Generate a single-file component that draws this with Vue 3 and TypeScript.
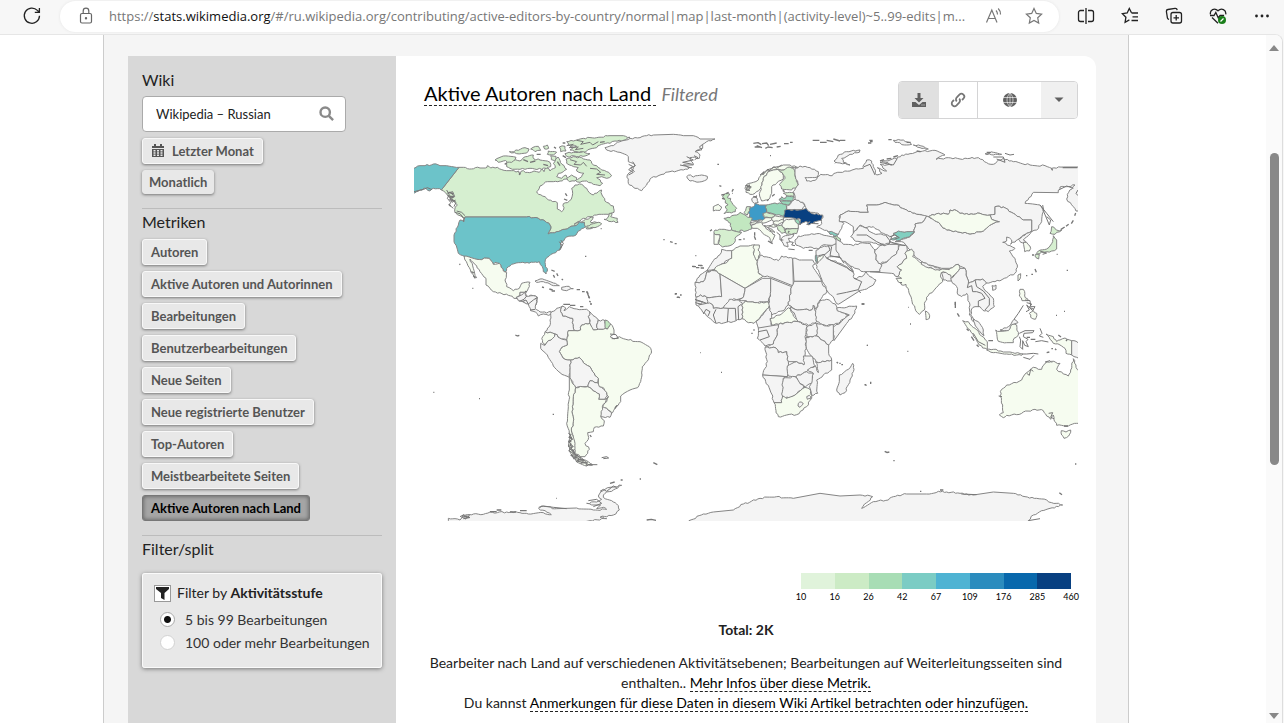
<script setup lang="ts">
import { ref } from 'vue'

type Tone = 'none' | 'faint' | 'pale' | 'soft' | 'mint' | 'sea' | 'aqua' | 'blue' | 'navy' | 'line'
type Country = [Tone, string]
interface Region { x: number; y: number; shapes: Country[]; specks: string }

const metrics = [
  'Autoren', 'Aktive Autoren und Autorinnen', 'Bearbeitungen', 'Benutzerbearbeitungen',
  'Neue Seiten', 'Neue registrierte Benutzer', 'Top-Autoren', 'Meistbearbeitete Seiten',
  'Aktive Autoren nach Land',
]
const activeMetric = ref('Aktive Autoren nach Land')
const wiki = ref('Wikipedia – Russian')
const level = ref('low')
const scaleColors = ['#e0f3db', '#ccebc5', '#a8ddb5', '#7bccc4', '#4eb3d3', '#2b8cbe', '#0868ac', '#084081']
const scaleTicks = [10, 16, 26, 42, 67, 109, 176, 285, 460]

const regions: Region[] = [
  // North America
  { x: 1230, y: 375, shapes: [
    ['pale', '147 127 160 127 178 132 196 128 210 129 226 129 232 122 242 129 262 127 290 137 304 137 318 141 326 138 330 148 334 138 358 143 372 138 388 142 395 132 402 140 410 128 420 138 436 128 430 116 436 102 444 96 450 106 456 118 470 133 460 140 445 145 440 155 455 160 468 150 475 162 450 168 430 170 412 170 402 175 390 183 380 200 386 208 405 215 415 225 442 233 442 252 455 260 462 248 460 236 472 233 484 222 488 205 485 190 495 180 515 178 530 190 538 203 550 210 565 200 575 195 576 210 590 232 610 243 612 262 595 268 560 270 520 280 492 298 515 290 540 278 550 277 540 290 572 296 550 308 530 312 522 302 523 292 505 296 490 303 465 313 440 320 414 327 422 312 420 300 405 288 385 280 350 276 165 276 160 280 150 272 138 265 134 255 142 240 130 228 112 210 94 195'],
    ['aqua', '-20 138 12 130 30 122 45 122 70 117 90 122 110 122 147 127 94 195 82 191 70 190 60 198 48 190 30 195 20 200 0 206 -20 206'],
    ['aqua', '165 276 350 276 385 280 405 288 420 300 422 312 414 327 440 320 465 313 490 303 505 296 508 290 523 292 526 305 505 318 498 330 470 336 455 350 450 375 430 385 410 398 405 412 412 438 408 447 400 440 397 425 388 410 370 412 345 414 325 413 305 418 290 430 288 440 280 438 268 415 255 412 250 418 238 400 200 403 165 395 145 385 138 360 132 350 132 330 145 300 150 285 162 290'],
    ['faint', '163 393 200 403 238 400 250 418 268 415 280 438 290 442 285 465 290 485 310 497 328 490 335 475 360 472 355 490 345 502 330 502 330 512 318 520 295 511 250 500 228 480 228 460 210 440 190 412 180 402 190 430 200 458 192 455 178 428 165 405'],
    ['none', '318 520 330 512 330 502 345 502 348 514 370 512 382 518 378 540 360 538 330 527'],
    ['none', '375 468 390 462 415 468 430 474 448 482 430 482 420 477 400 470 385 472'],
    ['none', '455 487 470 484 490 491 470 497 455 494'],
    ['pale', '290 112 310 105 330 108 340 98 358 92 370 90 372 102 390 105 420 112 422 125 395 133 360 130 330 133 300 130 290 125'],
    ['pale', '255 105 280 93 318 97 305 112 280 108 265 112'],
    ['pale', '470 50 490 48 520 40 560 38 600 32 640 32 660 37 640 46 615 48 600 55 575 58 560 68 540 72 520 82 495 80 480 75 500 64 475 60'],
    ['pale', '465 86 490 82 520 80 540 86 525 93 500 95 470 94'],
    ['pale', '468 102 490 95 515 98 540 105 545 115 560 122 575 135 590 140 605 152 590 160 575 155 560 158 578 175 570 182 550 178 530 168 510 172 495 165 515 155 522 145 500 138 505 128 485 122 470 115'],
    ['pale', '298 80 325 76 345 68 357 72 350 84 320 86'],
    ['pale', '362 72 385 64 392 76 375 80'],
    ['pale', '400 64 412 60 416 70 404 72'],
    ['pale', '415 78 440 82 430 90 412 88'],
    ['pale', '448 66 465 64 468 78 452 80'],
    ['pale', '422 92 438 94 434 108 424 104'],
    ['pale', '470 160 485 150 500 158 495 168 478 170'],
    ['pale', '582 283 592 280 598 265 606 265 602 275 622 280 624 292 605 290'],
    ['pale', '530 303 550 296 565 292 575 297 555 308 538 310'],
    ['line', '470 62 490 58 478 68 505 66 496 74 520 70'], ['line', '500 46 520 50 512 58 540 52 548 60 565 50'],
    ['line', '480 104 500 110 492 118 512 120 520 112 530 124'], ['line', '540 130 560 132 572 142 560 148 585 150'],
    ['line', '110 195 118 210 112 220 122 232 118 240 130 250'], ['line', '120 200 130 212 125 222 138 232 132 245'],
    ['line', '112 205 128 200 134 215 120 218 126 232 136 225'], ['line', '134 262 150 266 162 280 160 290'],
    ['line', '140 258 155 262 165 272'], ['line', '452 345 460 355 452 370'], ['line', '448 350 456 362 448 374'],
    ['line', '12 200 28 196 44 192 52 188 66 194'],
  ], specks: 'M424 435l10 4M440 445l4 8M430 450l4 8M455 462l4 3M418 492l10 3M500 494h10M516 500h8M530 500l5 6M536 515l3 5M538 528l4 4M148 417l3 2M187 490h3M525 394h4M572 311h3M466 205l5 8M462 222l10 4M290 114l-6 4M380 88h12M432 66l6 4M458 54h8M396 486l6 2M184 440l8 4M190 452l6 8M460 538h20M115 202l14 4M112 212l20 4M118 224l18 4M116 238l6 6M328 150l2-8M340 104l14 6M360 112l16-4M400 118l14 4M442 110l8 12M458 92l10 6M570 52l14-2' },
  // South America
  { x: 1230, y: 870, shapes: [
    ['none', '318 22 330 17 345 7 348 18 370 17 382 22 378 42 376 55 390 66 410 69 422 64 424 72 416 76 400 72 385 78 376 66 362 62 355 42 338 34 325 32'],
    ['line', '328 34 342 28 350 18'], ['line', '355 42 370 30 382 22'], ['line', '360 60 376 58'], ['line', '338 34 348 30 355 42'],
    ['none', '425 65 440 55 458 48 452 65 458 78 488 85 490 110 495 122 475 122 472 150 455 147 435 132 405 125 418 110 420 90'],
    ['none', '458 48 468 55 462 62 478 50 500 57 530 58 540 66 535 80 540 100 515 105 512 120 495 122 490 110 488 85 458 78 452 65'],
    ['none', '540 66 555 80 565 90 560 105 565 118 550 120 542 105 535 80'],
    ['none', '565 90 585 92 588 112 580 118 565 118 560 105'],
    ['faint', '602 102 612 120 612 132 600 140 612 147 628 140 640 146 655 150 690 155 712 167 722 175 724 190 710 215 697 230 696 255 692 275 683 293 660 300 645 308 632 318 632 335 615 355 603 372 603 365 590 355 577 350 590 335 595 320 590 308 582 295 565 290 565 265 548 245 540 230 520 218 508 202 482 210 465 208 448 185 455 172 472 165 470 150 475 122 495 122 512 120 515 105 540 100 550 120 565 118 580 118 592 117'],
    ['soft', '585 90 602 102 592 117 585 113'],
    ['faint', '405 125 435 132 428 145 415 152 405 166 397 158 398 140'],
    ['none', '435 132 455 147 470 150 472 165 455 172 448 185 465 208 482 210 480 240 478 262 450 248 430 228 412 195 392 175 392 160 405 166 415 152 428 145'],
    ['none', '482 210 508 202 520 218 540 230 548 245 565 265 563 278 540 272 533 290 505 290 497 294 480 262 480 240'],
    ['none', '540 272 563 278 568 290 590 308 592 318 585 328 566 328 568 312 550 303 533 290'],
    ['none', '577 350 590 355 605 368 600 382 572 380 572 362'],
    ['faint', '497 293 533 290 550 303 568 312 566 328 585 328 595 320 577 350 572 380 583 392 580 408 553 412 550 425 533 428 536 442 525 460 538 478 525 500 510 500 495 488 492 460 484 420 490 395 487 350 490 320'],
    ['faint', '478 262 485 275 497 293 490 320 487 350 490 395 484 420 495 460 492 490 510 505 530 512 548 525 530 528 500 516 482 490 476 460 478 430 470 400 475 350 478 300'],
    ['line', '475 430 484 434 476 442 488 448 475 455 484 462 474 468 486 474 476 482 490 490 482 496 500 500 490 506 510 508 498 514 522 512 512 520 532 516 528 526 545 522'],
    ['line', '478 432 486 445 478 458 490 470 478 476 494 486 486 500 506 504 504 514 528 520'],
    ['line', '484 482 500 496 518 506 534 524 562 524'],
    ['line', '600 132 618 134 625 145 605 146'], ['line', '575 503 590 500 596 504 580 506'],
    ['none', '115 685 135 686 150 690 158 676 180 674 190 672 220 673 240 666 262 668 290 666 330 668 355 672 400 668 424 674 405 662 386 656 395 648 440 656 500 654 550 660 590 658 580 652 560 656 572 645 545 645 530 640 560 636 575 628 565 618 572 606 600 592 635 586 610 600 585 610 580 622 605 632 620 642 628 660 610 675 570 682 590 686 540 692 480 705 120 705'],
    ['line', '150 680 162 674 172 684 178 676 165 688'], ['line', '535 632 560 628 575 640 550 650'], ['line', '570 604 580 598 590 604 610 588 620 592'],
    ['line', '386 652 400 648 430 652 470 656'],
  ], specks: 'M316 135l6 3M322 138l6-2M70 307h3M207 326h3M428 373h4M730 518l12 6M689 567h4M632 570h6M600 580l14-4M438 625h2M540 435l4 6M425 3h10M614 356l8-10M530 4l8 20M540 42h6M480 46h16M510 50h10M240 665h20M260 660h14M300 666h18M330 662h20M710 690l14-2 14 3M345 4l6 2M478 440l8 6M476 452l8 4M480 466l8 4M484 478l8 4M492 494l12 4M504 508l16 2M155 682l18-4M160 686l20-4' },
  // Greenland and Europe
  { x: 1920, y: 375, shapes: [
    ['none', '-105 68 -80 62 -60 50 -30 40 0 38 20 32 40 30 100 28 130 32 160 32 180 42 225 42 200 50 188 58 188 70 165 80 180 90 178 100 150 98 155 110 160 120 130 120 155 128 130 135 90 140 60 150 35 158 20 180 5 197 -15 190 -35 175 -38 150 -22 135 -15 120 -35 110 -35 95 -60 82 -100 75'],
    ['line', '140 95 160 105 128 112 158 118'], ['line', '120 120 140 124 150 128'], ['line', '-22 110 -14 122 -28 130 -16 140'],
    ['line', '188 58 178 66 186 74 168 78'], ['line', '162 92 174 98 164 104'], ['line', '-34 118 -22 124 -34 134 -20 142 -34 150'],
    ['none', '140 155 152 150 160 156 185 150 202 154 200 164 178 171 150 168'],
    ['faint', '315 190 320 178 340 172 355 165 365 148 380 135 400 126 430 120 450 120 475 128 450 130 432 135 415 133 400 135 385 140 370 160 366 180 360 192 345 205 330 208 318 202'],
    ['line', '316 182 330 180 318 190 332 188 322 198'], ['line', '360 150 372 140 368 150 385 132 384 140 402 126 410 130 425 120'],
    ['faint', '370 160 385 140 400 135 415 133 430 150 430 162 410 175 395 185 395 205 384 225 365 228 358 205 366 180'],
    ['pale', '415 133 432 135 450 126 460 130 465 150 475 180 455 195 425 192 418 178 435 160 430 150'],
    ['pale', '430 205 448 202 460 203 462 215 440 213'], ['mint', '418 222 425 215 436 220 440 213 463 216 460 228 440 228 418 226'],
    ['mint', '420 228 440 228 457 230 448 240 430 238'],
    ['none', '440 245 448 240 465 222 488 232 495 242 486 254 440 254'],
    ['mint', '378 240 405 234 438 238 440 255 436 274 410 270 380 262'],
    ['faint', '368 278 395 278 395 285 372 294 345 290 330 293 335 298 350 294'],
    ['blue', '330 248 340 245 345 235 358 240 378 240 380 262 368 270 375 280 368 286 345 287 332 284 325 262'],
    ['none', '335 222 350 212 352 222 355 232 343 235 337 230'], ['pale', '312 262 320 245 332 245 325 262 322 270'],
    ['pale', '368 266 380 262 405 270 395 278 372 277'],
    ['faint', '395 278 405 272 432 276 430 284 412 290 398 288'], ['faint', '400 290 430 282 430 292 412 300 400 296'],
    ['soft', '252 280 270 278 275 272 290 270 300 262 318 272 337 280 330 295 335 312 318 318 300 316 300 322 275 315 272 295'],
    ['pale', '225 315 245 313 275 315 305 322 285 340 284 352 270 362 248 366 235 355 240 330 222 326'],
    ['faint', '222 326 240 330 235 358 222 358'],
    ['soft', '248 215 256 206 270 208 262 218 272 220 275 232 290 250 286 260 268 262 252 266 262 254 256 246 264 240 256 234 256 226'],
    ['faint', '220 245 235 238 245 246 240 256 220 258'],
    ['faint', '335 300 350 294 366 290 370 302 385 315 405 330 400 342 395 352 385 335 368 325 352 310 337 310'],
    ['faint', '425 300 440 283 465 282 475 296 475 310 450 312 430 308'], ['pale', '435 314 450 312 475 310 470 326 440 328'],
    ['pale', '408 302 425 300 432 308 437 322 425 325 414 315'], ['mint', '464 282 476 284 480 298 472 296'],
    ['faint', '372 302 400 298 408 305 385 306 405 322 390 316'],
    ['none', '424 340 436 332 462 328 458 336 445 340 450 350 440 352 444 366 432 362'],
    ['line', '410 322 420 330 420 345 430 345'], ['line', '448 350 460 352 455 360 465 362'], ['line', '445 372 464 374'],
    ['none', '465 345 475 333 500 330 530 326 560 332 592 335 595 358 545 362 535 372 510 366 490 370 468 360'],
    ['none', '528 376 540 368 592 358 612 380 625 412 640 440 600 395 575 395 555 398 535 415 528 400'],
    ['none', '528 412 550 388 560 400 600 415 620 425 640 442 642 460 665 455 678 440 690 455 708 465 700 480 680 492 655 500 600 535 590 536 582 520 562 498 545 462 530 430'],
    ['line', '560 400 620 428 640 442'], ['line', '590 508 620 502 655 494 665 470 642 460'], ['line', '655 494 662 504'],
    ['line', '535 392 555 388 570 375 565 362'], ['line', '575 365 570 392 600 398 612 415'],
    ['faint', '532 400 548 388 550 396 540 406 532 416'], ['sea', '526 392 531 390 531 412 526 404'],
    ['navy', '434 256 448 254 470 256 486 254 500 250 512 264 530 266 548 270 546 286 520 292 535 296 500 298 510 290 492 292 480 300 482 284 464 280 432 278'],
    ['sea', '562 318 580 318 595 328 590 333 570 328'], ['soft', '580 335 590 333 602 342 600 350 590 345'],
  ], specks: 'M390 92h3M232 118h5M238 182l6 2M280 192l-4 8M276 205h2M258 206l8-4M70 344h4M90 350l8 2M104 356h6M166 392h3M156 424h8M168 428h10M180 422h8M105 506h6M112 516l8 2M340 55l14-2 10 6M350 62l16 6M366 56l14-2 6 8M376 70l8-4 14 2M390 58l20-4M410 66l12-2M432 56h14M450 52h8M344 66h16M518 46h20M540 52h20M560 46l20 4M580 42l20 6M600 46h16M690 50h8M344 322v10M343 334l4 10M384 348l14 8M296 344h8M310 342h4M396 214l8-6M382 228l4-6M506 376h12M428 196l6 4M448 318l-4 5M210 318l6-4M244 210l10-2M246 220l8 2M340 214l10 4M320 184l14 2M318 194l12 2' },
  // Africa
  { x: 2010, y: 720, shapes: [
    ['none', '155 28 170 32 185 32 185 55 150 75 135 90 110 92 130 62 150 44'],
    ['none', '75 128 90 105 110 92 133 90 110 96 100 125'],
    ['none', '75 128 100 125 110 96 133 92 150 102 155 170 110 172 92 165 78 172'],
    ['faint', '185 32 210 18 235 18 255 15 250 38 262 65 265 98 278 110 225 145 150 102 133 90 135 84 165 70 185 55'],
    ['faint', '252 15 268 15 264 30 270 42 260 62 250 42'],
    ['none', '262 65 270 45 295 52 325 62 335 48 368 55 370 138 305 112 278 108 265 98'],
    ['none', '368 55 395 60 428 60 436 72 428 78 440 98 455 124 372 124'],
    ['none', '150 102 225 145 220 172 185 180 160 204 130 205 125 192 110 190 110 172 155 170'],
    ['none', '225 145 278 115 302 115 302 155 295 185 255 188 222 182 205 180 220 172'],
    ['none', '302 115 365 140 355 195 345 208 305 225 295 200 302 155'],
    ['none', '372 124 455 124 470 155 450 180 435 208 430 195 425 210 375 208 355 195 365 140'],
    ['none', '78 172 92 165 110 172 112 190 125 192 130 205 160 204 178 178 205 180 218 190 216 236 190 245 140 250 115 232 95 210 78 195'],
    ['line', '75 178 110 190 85 195'], ['line', '78 182 98 185 92 192 76 188'], ['line', '100 222 108 208 120 215 114 228'],
    ['line', '138 250 130 225 138 208'], ['line', '172 246 175 205 160 204'], ['line', '198 242 196 205 175 205'], ['line', '206 240 204 200 215 192'],
    ['faint', '218 190 225 183 255 188 295 186 298 198 280 220 268 235 252 250 235 248 216 236'],
    ['none', '298 198 305 225 300 240 306 265 265 264 258 245 270 235 282 218'],
    ['faint', '300 236 330 225 355 203 385 245 345 248 305 255'],
    ['none', '360 200 375 208 425 210 430 195 440 220 440 245 415 256 385 245'],
    ['none', '450 182 470 178 496 192 502 212 535 225 505 250 470 258 440 245 436 225 440 205'],
    ['none', '560 198 550 225 530 250 492 302 488 262 510 250 538 225 502 212 500 204 530 202'],
    ['none', '440 250 470 258 490 254 490 300 476 315 440 288'],
    ['none', '412 258 440 250 442 280 435 290 410 290'],
    ['none', '408 292 440 288 476 315 476 340 485 360 445 368 425 348 408 320'],
    ['none', '265 264 325 254 322 285 310 312 285 318 262 295'], ['line', '265 275 290 270 298 290 270 300'],
    ['none', '325 254 345 248 385 245 412 258 405 290 408 320 405 345 402 375 380 365 355 365 350 335 325 338 318 324 285 322 310 312 322 285'],
    ['none', '285 322 318 324 325 338 350 335 355 365 352 410 278 405 285 385 292 365'],
    ['none', '352 378 380 365 402 375 400 348 425 348 436 378 410 395 378 410 355 408'],
    ['none', '436 365 445 368 485 360 485 390 460 405 440 420 443 460 425 466 418 440 430 400 412 390 436 378 445 398 442 380'],
    ['none', '378 410 410 395 430 400 425 430 405 442 385 425'],
    ['none', '278 405 352 410 340 415 340 445 335 488 312 488 300 450'],
    ['none', '340 415 375 410 402 442 370 468 345 475 335 462'],
    ['faint', '312 488 335 488 338 468 348 475 375 465 405 442 418 446 425 475 410 500 380 524 350 525 325 530 318 512'],
    ['none', '385 490 395 486 400 492 390 502 384 498'], ['none', '410 470 418 466 422 476 412 478'],
    ['none', '548 370 552 388 540 420 525 458 510 465 500 450 508 425 508 405 535 388'],
  ], specks: 'M590 316h4M575 192h8M500 366l4 4M508 370h4M514 374h5M584 434l6 2M600 430h4M90 338h2M153 397h3M244 280h4M250 270h4M68 80h10M84 76h12M92 84h10M14 162h6M20 172h8M30 165h5' },
  // Asia
  { x: 2580, y: 375, shapes: [
    ['none', '-195 130 -180 123 -150 128 -125 140 -128 156 -165 158 -160 168 -135 166 -118 148 -90 152 -60 142 -30 138 -5 132 10 130 12 118 20 105 35 108 40 125 50 150 66 145 52 128 80 138 60 118 95 120 65 108 90 105 110 100 125 90 150 86 180 80 225 76 255 90 228 103 265 98 300 102 330 100 355 98 380 113 400 118 415 105 430 100 460 110 510 120 555 122 575 130 610 126 654 126 680 126 680 260 648 258 640 245 620 222 622 208 645 180 620 185 600 186 595 203 520 202 495 235 540 240 550 260 545 290 530 315 515 320 515 285 490 285 460 265 430 246 405 245 405 268 390 270 360 265 340 268 300 265 290 257 270 255 265 268 235 265 205 275 170 268 140 255 110 240 75 232 50 240 20 240 25 262 0 262 -35 258 -60 270 -62 288 -48 295 -55 310 -65 328 -100 316 -130 306 -115 296 -112 270 -148 262 -160 252 -165 243 -172 232 -195 222 -200 200 -185 180 -195 150'],
    ['line', '12 125 30 118 45 150'], ['line', '60 112 100 120 112 100'], ['line', '596 195 620 183 640 190'], ['line', '654 195 648 205 654 212'],
    ['line', '-75 115 -60 92 -30 82 0 76'],
    ['none', '0 262 25 262 20 240 50 240 75 232 110 240 140 255 170 268 200 273 190 290 165 297 163 322 110 322 95 335 70 325 40 305 15 308 0 300 -20 325 -20 305 -45 290 -62 290 -60 270 -35 258'],
    ['none', '-20 325 0 302 15 308 40 325 70 330 95 335 88 355 60 360 35 352 0 350 -18 345 -28 335'],
    ['line', '-10 330 20 330 50 350 75 362'], ['line', '78 332 92 350 84 360 110 355'],
    ['none', '-72 338 -50 358 -20 362 0 354 30 355 45 375 48 405 65 420 60 440 10 440 -22 425 -40 415 -58 398 -72 375'],
    ['none', '45 375 60 362 88 358 115 358 115 375 105 390 80 410 55 415 48 405'],
    ['none', '30 440 60 440 65 416 80 412 105 390 115 375 118 360 140 362 142 375 135 385 140 400 112 425 125 435 112 455 95 445'],
    ['none', '200 273 230 290 260 315 300 322 330 327 370 318 395 298 418 290 395 283 390 270 405 268 405 245 430 246 460 265 490 285 515 285 515 320 500 325 485 335 470 345 452 358 455 345 440 336 440 348 428 352 450 362 465 370 448 378 465 400 472 420 465 445 440 458 405 470 380 474 368 462 345 465 325 475 318 450 315 430 295 418 270 430 245 430 205 420 185 410 165 395 150 375 140 362 125 350 105 350 130 342 150 335 163 322 165 297 190 290'],
    ['sea', '100 325 115 318 140 320 163 320 150 335 130 340 120 346 92 342 112 335'],
    ['line', '90 335 105 330 118 338 104 342'], ['line', '88 350 110 356 135 362'],
    ['faint', '205 275 235 265 265 268 270 255 290 257 300 265 340 268 360 265 390 270 395 283 418 290 395 298 370 318 330 327 300 322 260 315 230 290'],
    ['faint', '140 378 155 372 162 380 158 395 185 415 205 428 240 434 248 432 268 434 270 430 295 418 300 430 285 448 275 460 265 448 250 440 242 448 248 470 235 482 205 512 195 530 193 555 178 568 165 550 150 510 138 478 125 480 108 460 125 460 112 455 125 435 112 425 140 400 135 385'],
    ['none', '185 410 205 420 240 430 240 436 205 428 184 418'], ['none', '244 443 258 442 272 450 274 468 262 468 250 465'],
    ['faint', '196 558 206 565 208 580 198 584'],
    ['none', '300 430 315 430 318 450 325 475 345 465 368 462 380 474 368 484 380 500 400 520 403 545 385 560 372 558 360 545 345 545 335 552 332 570 345 585 340 590 328 570 330 540 320 505 305 515 295 510 290 485 278 475 272 460 285 448'],
    ['line', '325 475 322 488 335 482 338 500 350 500 365 505 375 520 355 528 355 545'], ['line', '345 465 350 485 370 498 388 520 388 540 375 555'],
    ['none', '340 582 355 590 370 615 372 632 355 615 345 600'],
    ['none', '396 482 408 480 408 492 398 496'], ['faint', '474 450 482 446 480 462 474 468'],
    ['none', '475 342 500 325 515 318 505 332 490 345 500 355 482 352'], ['faint', '490 352 500 352 512 370 508 378 494 380'],
    ['pale', '575 305 590 315 605 316 590 322 585 328 570 325'],
    ['pale', '580 332 590 345 590 372 575 378 560 380 545 382 530 388 535 378 560 372 572 360 578 350'],
    ['pale', '526 388 538 388 536 402 528 398'], ['line', '540 378 560 384 548 388'],
    ['line', '540 240 560 265 580 290'], ['line', '548 240 552 262 568 300 572 285 560 275'],
    ['none', '100 46 130 45 155 58 140 60 105 52'], ['none', '160 60 190 64 205 72 180 68'],
    ['none', '-78 108 -65 90 -40 80 0 75 -2 82 -30 88 -55 100 -50 112 -30 120 -60 114'],
    ['none', '375 86 400 82 425 88 400 90'], ['line', '435 85 450 90 462 88'], ['line', '400 96 430 96 435 112 410 102'],
  ], specks: 'M24 54h10M28 46h10M85 44h10M140 52h12M602 314l12-8M618 304l8-6M634 296l6-10M644 272l3-8M590 388h3M620 436h4M525 432l4 10M514 448h5M498 452h4M480 498l2 4M516 390h6M286 530v10M574 130l4 6M608 128h44M60 108l12-4M80 102l14-2M100 96l14-4M170 78l12 2M380 82h12' },
  // Oceania
  { x: 2580, y: 840, shapes: [
    ['faint', '308 122 325 125 335 138 350 150 365 168 382 185 382 208 368 204 350 182 330 150'],
    ['faint', '380 210 400 208 430 216 450 216 488 222 485 226 440 222 400 218'],
    ['faint', '407 150 420 154 445 150 455 132 470 135 475 165 462 175 460 188 440 188 415 184'],
    ['none', '420 150 445 140 462 118 474 128 455 134 445 152'], ['line', '462 118 475 100 490 76'],
    ['line', '478 160 495 152 522 152 518 158 492 160 490 170 504 178 498 185 505 200 494 196 488 182 488 208 480 200 482 180 478 170'],
    ['faint', '558 162 580 170 590 185 600 180 615 174 635 182 635 225 618 220 615 205 600 195 580 190 570 178'],
    ['none', '635 182 654 188 680 200 680 240 650 232 635 225'],
    ['faint', '480 28 490 28 494 48 505 62 486 62 478 48'], ['faint', '508 100 520 92 530 100 526 118 512 112'],
    ['line', '495 60 510 62 512 80 525 80 518 92 500 75 508 90 498 95'], ['line', '500 68 515 72 508 82 522 88'],
    ['line', '486 222 500 222 520 220 535 222'], ['line', '490 232 510 238 522 226'], ['line', '340 160 355 185 376 196'],
    ['line', '540 145 546 160 538 168 550 172'], ['line', '526 185 545 182 565 186'],
    ['faint', '418 405 430 398 428 375 420 348 425 328 440 315 470 308 485 300 500 278 520 262 535 268 545 268 555 250 575 244 600 250 590 268 610 282 625 288 632 270 640 236 648 262 680 300 680 430 650 430 625 438 590 436 582 420 580 405 572 418 560 408 550 392 525 388 490 396 470 404 440 406 430 413'],
    ['line', '566 400 578 398 572 412 582 416'], ['line', '416 348 426 350'], ['line', '555 246 570 242 576 248'], ['line', '500 280 508 286 512 268 520 274'],
    ['faint', '604 452 618 456 632 450 626 468 612 475 605 465'],
    ['none', '-515 740 -513 722 -470 702 -440 696 -380 690 -350 672 -300 655 -250 650 -200 655 -120 640 -60 648 0 645 38 650 20 668 5 685 40 665 85 660 100 650 140 642 200 642 235 634 260 636 300 640 340 645 400 636 460 640 495 650 530 655 560 660 575 668 608 675 570 685 545 692 520 705 505 722 505 740'],
    ['line', '505 722 540 716'], ['line', '304 642 350 644'],
  ], specks: 'M22 196h2M142 214h3M14 314h4M30 307h4M74 514l8 4M80 518l8-2M100 542h4M645 552h4M598 638l8 6M120 8h6M5 72h8M145 82h2M150 132h3M588 106h3M612 94h3M286 66v18M292 100l6 10M385 182h14M560 218l8-2M574 206h5M585 206l4 4M612 438h12M622 178l-4 5M500 172h10M512 178h14M595 165l8 6M320 146l6 6M334 170l8 12M350 194l6 6M180 634h4M240 630h10' },
]

const noise = (v: number) => {
  const s = Math.sin(v) * 43758.5
  return s - Math.floor(s) - 0.5
}

// Roughens slanted edges; the offsets depend only on the edge, so neighbours share a border.
function outline(points: string, open: boolean): string {
  const n = points.split(' ').map(Number)
  const count = n.length / 2
  let d = `M${n[0]} ${n[1]}`
  for (let i = 1; i <= (open ? count - 1 : count); i++) {
    const a = (i - 1) * 2
    const b = (i % count) * 2
    const [x1, y1, x2, y2] = [n[a], n[a + 1], n[b], n[b + 1]]
    const len = Math.hypot(x2 - x1, y2 - y1)
    if (!open && len > 9 && len < 60 && x1 !== x2 && y1 !== y2) {
      const steps = Math.max(2, Math.round(len / 7))
      const flip = x1 < x2 ? 1 : -1
      for (let s = 1; s < steps; s++) {
        const t = s / steps
        const place = flip > 0 ? s : steps - s
        const k = noise((x1 + x2) * 12.99 + (y1 + y2) * 78.23 + place * 37.7) * 5 * flip
        const mx = x1 + (x2 - x1) * t - ((y2 - y1) / len) * k
        const my = y1 + (y2 - y1) * t + ((x2 - x1) / len) * k
        d += `L${mx.toFixed(1)} ${my.toFixed(1)}`
      }
    }
    d += `L${x2} ${y2}`
  }
  return open ? d : d + 'Z'
}
</script>

<template>
  <div class="window">
    <header class="toolbar">
      <button class="tool reload" aria-label="Aktualisieren">
        <svg width="20" height="20" viewBox="0 0 20 20"><path d="M17.5 9.8A7.6 7.6 0 1 1 15.4 4.4L17.3 6.3M17.4 2v4.4h-4.6" /></svg>
      </button>
      <div class="address">
        <svg class="lock" width="14" height="18" viewBox="0 0 14 18"><rect x="1.5" y="6.5" width="11" height="9.5" rx="1.5" /><path d="M4.2 6.5V4a2.8 2.8 0 0 1 5.600 0v2.500" /><circle cx="7" cy="11.200" r=".6" /></svg>
        <a class="url" href="#">https://<b>stats.wikimedia.org</b>/#/ru.wikipedia.org/contributing/active-editors-by-country/normal|map|last-month|(activity-level)~5..99-edits|m...</a>
        <button class="tool dim" aria-label="Laut vorlesen">
          <svg width="18" height="18" viewBox="0 0 18 18"><path d="M1.500 15.500L6.800 3l5.200 12.500M3.300 11.500h7M11 3.500q1.500 1.500 1.500 4M13.200 1.500q2.500 2.500 2.300 6" /></svg>
        </button>
        <button class="tool dim" aria-label="Favorit">
          <svg width="18" height="18" viewBox="0 0 18 18"><path d="M9 1.500l2.300 4.900 5.300.7-3.900 3.700 1 5.300L9 13.500l-4.700 2.600 1-5.300L1.400 7.100l5.300-.7z" /></svg>
        </button>
      </div>
      <nav class="tools">
        <button class="tool" aria-label="Geteilter Bildschirm"><svg width="18" height="18" viewBox="0 0 18 18"><path d="M7 3.500H3.500a2 2 0 0 0-2 2v7a2 2 0 0 0 2 2H7M11 3.500h3.500a2 2 0 0 1 2 2v7a2 2 0 0 1-2 2H11M9 1v16" /></svg></button>
        <button class="tool" aria-label="Favoriten"><svg width="18" height="18" viewBox="0 0 18 18"><path d="M10.500 5.800L8.300 1.500 6.200 6l-4.800.7 3.500 3.500-.8 5 4.300-2.300M10.500 6H17M11.500 9.800H17M10.500 13.500H17" /></svg></button>
        <button class="tool" aria-label="Sammlungen"><svg width="18" height="18" viewBox="0 0 18 18"><rect x="6" y="5.500" width="10.500" height="10.500" rx="2" /><path d="M11.200 8v5.500M8.500 10.800H14M4 12.500l-.6-.3a2 2 0 0 1-1-1.400L1.400 4.500a1.800 1.800 0 0 1 1.500-2L10 1.400a2 2 0 0 1 2.200 1.700" /></svg></button>
        <button class="tool" aria-label="Leistung"><svg width="18" height="18" viewBox="0 0 18 18"><path d="M1.500 7.300C.5 3 5.500.2 9 3.800c3.500-3.600 8.500-.8 7.700 3.500M3 10.500l6 5.700M1 8.500h4l1.800-3 2.500 5.500 1.800-2.500h4" /><circle class="ok" cx="13" cy="13" r="4" /><path class="tick" d="M11.500 14.500l3-3" /></svg></button>
        <button class="tool" aria-label="Mehr"><svg width="18" height="18" viewBox="0 0 18 18"><g class="dots"><circle cx="3.500" cy="9" r="1.400" /><circle cx="9" cy="9" r="1.400" /><circle cx="14.500" cy="9" r="1.400" /></g></svg></button>
      </nav>
    </header>

    <div class="viewport">
      <div class="page">
        <div class="board">
          <aside class="sidebar">
            <label class="heading" for="wiki">Wiki</label>
            <div class="search">
              <input id="wiki" v-model="wiki" type="text">
              <svg width="16" height="16" viewBox="0 0 16 16"><circle cx="6.200" cy="6.200" r="4.700" /><path d="M9.800 9.800l4.300 4.300" /></svg>
            </div>
            <button class="chip range">
              <svg width="12" height="14" viewBox="0 0 12 14"><path d="M0 2h2V0h2v2h4V0h2v2h2v2H0z" /><path fill-rule="evenodd" d="M0 5h12v8H0zM1.500 6v1.500h2V6zM5 6v1.500h2V6zM8.500 6v1.500h2V6zM1.500 8.300v1.500h2V8.300zM5 8.300v1.500h2V8.300zM8.500 8.300v1.500h2V8.300zM1.500 10.600v1.500h2v-1.500zM5 10.600v1.500h2v-1.500zM8.500 10.600v1.500h2v-1.500z" /></svg>
              Letzter Monat
            </button>
            <button class="chip monthly">Monatlich</button>
            <hr>
            <h2 class="heading">Metriken</h2>
            <ul class="metrics">
              <li v-for="m in metrics" :key="m">
                <button class="chip" :class="{ active: m === activeMetric }" @click="activeMetric = m">{{ m }}</button>
              </li>
            </ul>
            <hr>
            <h2 class="heading">Filter/split</h2>
            <fieldset class="filter">
              <div class="filter-title">
                <svg width="17" height="17" viewBox="0 0 17 17"><rect x=".5" y=".5" width="16" height="16" /><path d="M2 2h13v2l-4.500 4v7L7 13V8L2 4z" /></svg>
                <span>Filter by <strong>Aktivitätsstufe</strong></span>
              </div>
              <label class="option"><input v-model="level" type="radio" name="level" value="low">5 bis 99 Bearbeitungen</label>
              <label class="option"><input v-model="level" type="radio" name="level" value="high">100 oder mehr Bearbeitungen</label>
            </fieldset>
          </aside>

          <main class="detail">
            <div class="title-row">
              <h1><a href="#">Aktive Autoren nach Land&nbsp;</a> <em>Filtered</em></h1>
              <div class="actions">
                <button class="download" aria-label="Herunterladen"><svg width="16" height="16" viewBox="0 0 16 16"><path d="M6.500 1h3v5h3L8 10.500 3.500 6h3z" /><path fill-rule="evenodd" d="M1 10h3.500L8 13l3.500-3H15v5H1zM10.500 12.500v1h1v-1zM12.500 12.500v1h1v-1z" /></svg></button>
                <button class="link" aria-label="Link"><svg width="16" height="16" viewBox="0 0 16 16"><path d="M6.800 9.400a2.800 2.800 0 0 1 0-4l2.600-2.800a2.800 2.800 0 0 1 4 4L12 8M9.200 6.600a2.800 2.800 0 0 1 0 4l-2.600 2.800a2.800 2.800 0 0 1-4-4L4 8" /></svg></button>
                <button class="globe" aria-label="Karte"><svg width="14" height="14" viewBox="0 0 14 14"><circle cx="7" cy="7" r="7" /><path d="M0 4.500h14M0 9.500h14M7 0v14M7 0C3 4 3 10 7 14M7 0c4 4 4 10 0 14" /></svg></button>
                <button class="more" aria-label="Diagrammtyp wählen"><svg width="10" height="6" viewBox="0 0 10 6"><path d="M.500.500h9L5 5z" /></svg></button>
              </div>
            </div>

            <svg class="map" viewBox="1242 390 1992 1173" role="img" aria-label="Aktive Autoren nach Land">
              <g v-for="(r, i) in regions" :key="i" :transform="`translate(${r.x} ${r.y})`">
                <path v-for="(s, j) in r.shapes" :key="j" :class="s[0]" :d="outline(s[1], s[0] === 'line')" />
                <path class="line specks" :d="r.specks" />
              </g>
            </svg>

            <div class="legend">
              <div class="bands"><span v-for="c in scaleColors" :key="c" :style="{ background: c }"></span></div>
              <div class="ticks"><span v-for="t in scaleTicks" :key="t">{{ t }}</span></div>
            </div>

            <p class="total">Total: 2K</p>
            <p class="about">Bearbeiter nach Land auf verschiedenen Aktivitätsebenen; Bearbeitungen auf Weiterleitungsseiten sind enthalten.. <a href="#">Mehr Infos über diese Metrik.</a><br>Du kannst <a href="#">Anmerkungen für diese Daten in diesem Wiki Artikel betrachten oder hinzufügen.</a></p>
          </main>
        </div>
      </div>
      <div class="scroll" aria-hidden="true">
        <svg width="10" height="6" viewBox="0 0 10 6"><path d="M5 0l5 6H0z" /></svg>
        <div class="track"><div class="thumb"></div></div>
        <svg width="10" height="6" viewBox="0 0 10 6"><path d="M0 0h10L5 6z" /></svg>
      </div>
    </div>
  </div>
</template>

<style>
body { margin: 0; overflow: hidden; }
</style>

<style scoped>
* { box-sizing: border-box; }
button, input { font: inherit; }
.window { display: flex; flex-direction: column; height: 100vh; overflow: hidden; background: #f7f7f7; color: #222; font-family: Lato, "Liberation Sans", sans-serif; font-size: 14px; }
.toolbar { display: flex; align-items: center; flex: none; height: 32px; padding-left: 22px; }
.tool { display: flex; padding: 0; border: 0; background: none; }
.tool svg { fill: none; stroke: #222; stroke-width: 1.300; }
.tool.dim svg { stroke: #777; stroke-width: 1.200; }
.tool .dots { fill: #222; stroke: none; }
.tool .ok { fill: #1b7f1b; stroke: none; }
.tool .tick { stroke: #fff; }
.address { display: flex; flex: 1; align-items: center; min-width: 0; height: 31px; margin: 0 18px; padding: 0 16px 0 19px; border-radius: 16px; background: #fff; box-shadow: 0 0 3px #e4e4e4; }
.lock { flex: none; margin-right: 16px; fill: none; stroke: #666; stroke-width: 1.200; }
.url { flex: 1; min-width: 0; overflow: hidden; white-space: nowrap; color: #777; font: 13px/20px "Open Sans", "Noto Sans", sans-serif; text-decoration: none; }
.url b { color: #111; font-weight: 400; }
.address .dim { margin-left: 12px; }
.address .dim + .dim { margin-left: 22px; }
.tools { display: flex; gap: 26px; padding-right: 13px; }
.viewport { display: flex; flex: 1; min-height: 0; margin: 2px 1px 0 0; border-top: 1px solid #e6e6e6; border-right: 1px solid #ddd; border-radius: 0 8px 0 0; background: #fff; overflow: hidden; }
.page { flex: 1; min-width: 0; margin: 0 137px 0 103px; padding: 21px 32px 0 24px; border: solid #ccc; border-width: 0 1px; background: #f5f5f5; }
.board { display: flex; height: 100%; border-radius: 0 12px 0 0; background: #fff; overflow: hidden; }
.sidebar { flex: none; width: 268px; padding: 14px; background: #d8d8d8; }
.heading { display: block; margin: 0; font-size: 16px; line-height: 20px; font-weight: 400; }
.search { display: flex; align-items: center; width: 204px; height: 36px; margin: 6px 0; padding: 0 10px 0 13px; border: 1px solid #aaa; border-radius: 4px; background: #fff; }
.search input { flex: 1; min-width: 0; padding: 0; border: 0; outline: 0; background: none; color: #222; font-size: 13px; }
.search svg { flex: none; fill: none; stroke: #8a8a8a; stroke-width: 2.400; }
.chip { display: flex; align-items: center; height: 26px; padding: 0 8px; border: 1px solid #f8f8f8; border-radius: 3px; background: #e8e8e8; box-shadow: 0 1px 3px #777; color: #555; font-size: 13px; font-weight: 700; line-height: 18px; white-space: nowrap; }
.chip svg { margin: 0 8px 0 1px; fill: #555; }
.chip.monthly { height: 24px; margin-top: 6px; padding: 0 6px; border-color: #e8e8e8; }
.chip.active { border-color: #777; background: #a5a5a5; box-shadow: inset 0 0 4px #555; color: #000; }
hr { height: 1px; margin: 14px 0 3px; border: 0; background: #bcbcbc; }
.metrics { display: grid; gap: 6px; margin: 7px 0 0; padding: 0; list-style: none; }
.filter { margin: 14px 0 0; min-width: 0; height: 95px; padding: 9px 11px; border: 1px solid #fafafa; border-radius: 3px; background: #e8e8e8; box-shadow: 0 1px 4px #777; }
.filter-title { display: flex; align-items: center; gap: 6px; height: 20px; line-height: 20px; }
.filter-title svg { fill: #222; }
.filter-title rect { fill: #fff; stroke: #999; }
.option { display: flex; align-items: center; height: 23px; margin-left: 6px; color: #333; line-height: 20px; white-space: nowrap; }
.filter-title + .option { margin-top: 5px; }
.option input { appearance: none; flex: none; width: 15px; height: 15px; margin: 0 10px 0 0; border: 1px solid #d2d2d2; border-radius: 50%; background: #fff; }
.option input:checked { border-color: #aaa; background: radial-gradient(circle, #111 3px, #fff 4px); }
.detail { display: flex; flex: 1; flex-direction: column; min-width: 0; padding: 25px 18px 0; }
.title-row { display: flex; align-items: flex-start; justify-content: space-between; padding-left: 10px; }
h1 { margin: 0; font-size: 20px; line-height: 24px; font-weight: 400; }
a { color: #000; }
h1 a, .about a { border-bottom: 1px dashed #222; text-decoration: none; }
h1 em { color: #777; font-size: 18px; }
.actions { display: flex; height: 38px; border: 1px solid #d4d4d5; border-radius: 4px; overflow: hidden; }
.actions button { display: flex; align-items: center; justify-content: center; padding: 0; border: 0; background: #fff; }
.actions svg { fill: #606060; }
.actions .download { width: 40px; background: #e0e0e0; }
.actions .link { width: 39px; border-right: 1px solid #d4d4d5; }
.actions .link svg { fill: none; stroke: #777; stroke-width: 1.800; }
.actions .globe { width: 63px; }
.actions .globe path { fill: none; stroke: #fff; stroke-width: .6; }
.actions .more { width: 36px; background: #f0f0f0; }
.map { display: block; width: 100%; margin-top: 11px; aspect-ratio: 664 / 391; stroke: #858585; stroke-width: 3; stroke-linejoin: round; overflow: hidden; }
.none { fill: #f4f4f4; }
.faint { fill: #f6fcf0; }
.pale { fill: #d6efd0; }
.soft { fill: #c2e7c0; }
.mint { fill: #98d8ba; }
.sea { fill: #82cfc0; }
.aqua { fill: #6cc3c9; }
.blue { fill: #3d9bc8; }
.navy { fill: #084081; }
.line { fill: none; stroke: #777; }
.specks { stroke-width: 4; }
.legend { align-self: flex-end; width: 270px; margin: 52px 7px 0 0; }
.bands { display: grid; grid-template-columns: repeat(8, 1fr); height: 16px; }
.ticks { display: flex; justify-content: space-between; margin: 2px -17px 0; font-size: 9px; line-height: 12px; color: #000; }
.ticks span { flex: 1; text-align: center; }
.total { margin: 17px 0 0; line-height: 20px; font-weight: 700; text-align: center; }
.about { margin: 13px 10px 0; line-height: 20px; text-align: center; }
.scroll { display: flex; flex: none; flex-direction: column; align-items: center; width: 16px; padding: 10px 0 4px; background: #fafafa; }
.scroll svg { flex: none; fill: #888; }
.track { flex: 1; width: 9px; padding-top: 102px; }
.thumb { height: 56%; max-height: 312px; border-radius: 5px; background: #888; }
</style>
